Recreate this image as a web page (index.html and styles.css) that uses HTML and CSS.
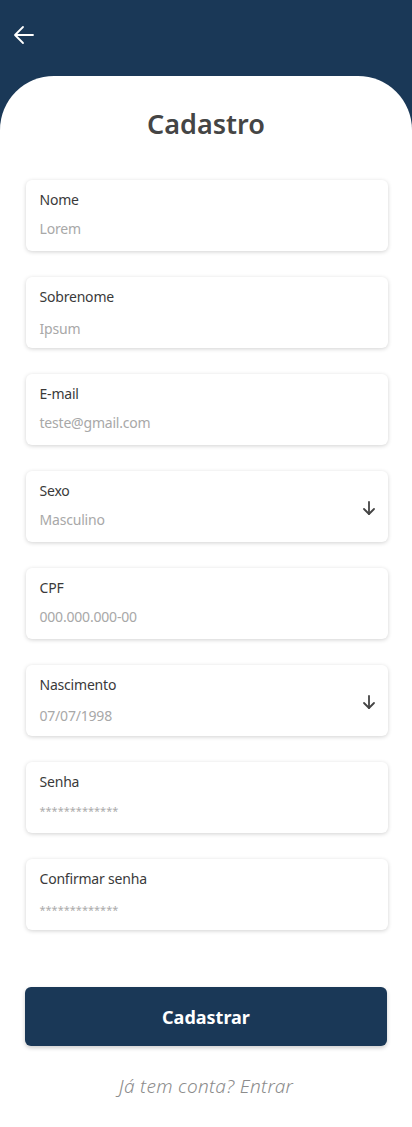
FILE: index.html
```html
<!DOCTYPE html>
<html lang="pt-BR">
<head>
<meta charset="utf-8">
<meta name="viewport" content="width=device-width, initial-scale=1">
<title>Cadastro</title>
<link rel="stylesheet" href="styles.css">
</head>
<body>
<div class="app">
  <header class="topbar">
    <button class="back" aria-label="Voltar">
      <svg width="22" height="20" viewBox="0 0 22 20" fill="none" stroke="#fff" stroke-width="1.8" stroke-linecap="round" stroke-linejoin="round"><path d="M20 10H3"/><path d="M10 2L2 10l8 8"/></svg>
    </button>
  </header>
  <main class="sheet">
    <h1 class="title">Cadastro</h1>
    <form class="form">
      <div class="field"><span class="label">Nome</span><span class="value">Lorem</span></div>
      <div class="field"><span class="label">Sobrenome</span><span class="value v2">Ipsum</span></div>
      <div class="field"><span class="label">E-mail</span><span class="value">teste@gmail.com</span></div>
      <div class="field select"><div class="fcol"><span class="label">Sexo</span><span class="value">Masculino</span></div>
        <svg class="caret" width="14" height="16" viewBox="0 0 14 16" fill="none" stroke="#444" stroke-width="1.8" stroke-linecap="round" stroke-linejoin="round"><path d="M7 2v12"/><path d="M2 9l5 5 5-5"/></svg></div>
      <div class="field"><span class="label">CPF</span><span class="value">000.000.000-00</span></div>
      <div class="field select"><div class="fcol"><span class="label">Nascimento</span><span class="value v3">07/07/1998</span></div>
        <svg class="caret" width="14" height="16" viewBox="0 0 14 16" fill="none" stroke="#444" stroke-width="1.8" stroke-linecap="round" stroke-linejoin="round"><path d="M7 2v12"/><path d="M2 9l5 5 5-5"/></svg></div>
      <div class="field"><span class="label">Senha</span><span class="value pw">*************</span></div>
      <div class="field"><span class="label">Confirmar senha</span><span class="value pw v3">*************</span></div>
    </form>
    <button class="submit">Cadastrar</button>
    <p class="login">Já tem conta? Entrar</p>
  </main>
</div>
</body>
</html>
```
FILE: styles.css
```css
* { box-sizing: border-box; }
html, body { margin: 0; padding: 0; }
body {
  font-family: "Noto Sans", "Open Sans", sans-serif;
  background: #1a3857;
}
.app {
  width: 412px;
  height: 1127px;
  display: flex;
  flex-direction: column;
  background: #1a3857;
  overflow: hidden;
}
.topbar {
  height: 76px;
  padding: 25px 0 0 13px;
}
.back {
  background: none;
  border: 0;
  padding: 0;
  width: 22px;
  height: 20px;
  display: block;
}
.sheet {
  flex: 1;
  background: #fff;
  border-radius: 54px 54px 0 0;
  display: flex;
  flex-direction: column;
  align-items: center;
  padding-top: 28px;
}
.title {
  margin: 0;
  font-size: 27px;
  font-weight: 600;
  color: #454545;
  line-height: 40px;
  letter-spacing: 0;
}
.form {
  width: 362px;
  margin-top: 36px;
  margin-left: 1px;
  display: flex;
  flex-direction: column;
  gap: 26px;
}
.field {
  height: 71px;
  background: #fff;
  border-radius: 6px;
  box-shadow: 0 1px 4px rgba(0,0,0,0.18);
  padding: 9px 14px 0;
  display: flex;
  flex-direction: column;
}
.field.select {
  flex-direction: row;
  justify-content: space-between;
  align-items: flex-start;
  padding: 9px 12px 0 14px;
}
.fcol { display: flex; flex-direction: column; }
.caret { margin-top: 20px; }
.label {
  font-size: 14px;
  line-height: 22px;
  color: #3a3a3a;
  font-weight: 400;
  letter-spacing: -0.2px;
}
.value {
  margin-top: 7px;
  font-size: 14px;
  line-height: 22px;
  color: #a8a8a8;
  letter-spacing: -0.2px;
}
.value.v2 { margin-top: 10px; }
.value.v3 { margin-top: 9px; }
.value.pw { font-size: 11px; letter-spacing: 0; color: #ababab; }
.submit {
  margin-top: 57px;
  width: 362px;
  height: 59px;
  border: 0;
  border-radius: 6px;
  background: #1a3857;
  color: #fff;
  font-family: inherit;
  font-size: 18px;
  font-weight: 700;
  box-shadow: 0 2px 4px rgba(0,0,0,0.2);
}
.login {
  margin: 27px 0 0;
  font-size: 19px;
  font-weight: 300;
  font-style: italic;
  color: #8c8c8c;
  line-height: 26px;
  letter-spacing: 0.3px;
}
```
